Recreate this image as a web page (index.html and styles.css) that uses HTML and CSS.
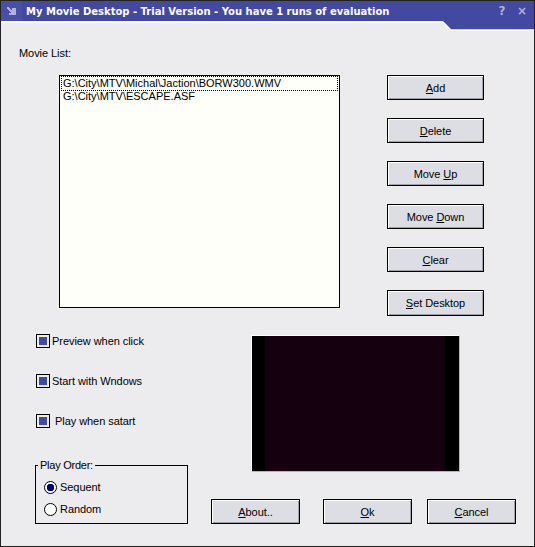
FILE: index.html
```html
<!DOCTYPE html>
<html lang="en">
<head>
<meta charset="utf-8">
<title>My Movie Desktop</title>
<link rel="stylesheet" href="styles.css">
</head>
<body>
<div class="window">
  <header class="titlebar">
    <span class="icon-slot"><svg class="app-icon" width="10" height="9" viewBox="0 0 10 9"><path d="M0 0h2v1h1v1h1v1h1V1h4v7H2V6h2V5H3V4H2V3H1V2H0z" fill="#b0b3d2"/></svg></span>
    <span class="title">My Movie Desktop - Trial Version - You have 1 runs of evaluation</span>
    <span class="caption-btn">?</span>
    <span class="caption-btn close">×</span>
  </header>
  <svg class="wedge" width="92" height="10" viewBox="0 0 92 10"><path d="M0 0h92v9H9z" fill="#4349a1"/><path d="M0 0l9 9h83" fill="none" stroke="#fff" stroke-width="1.4"/></svg>
  <main class="content">
    <div class="list-label">Movie List:</div>
    <section class="top-row">
      <div class="listbox">
        <div class="item selected">G:\City\MTV\Michal\Jaction\BORW300.WMV</div>
        <div class="item">G:\City\MTV\ESCAPE.ASF</div>
      </div>
      <div class="side-buttons">
        <button class="btn"><u>A</u>dd</button>
        <button class="btn"><u>D</u>elete</button>
        <button class="btn">Move <u>U</u>p</button>
        <button class="btn">Move <u>D</u>own</button>
        <button class="btn"><u>C</u>lear</button>
        <button class="btn tall"><u>S</u>et Desktop</button>
      </div>
    </section>
    <section class="bottom-row">
      <div class="options">
        <label class="check"><span class="box"></span><span>Preview when click</span></label>
        <label class="check"><span class="box"></span><span>Start with Wndows</span></label>
        <label class="check third"><span class="box"></span><span>Play when satart</span></label>
        <fieldset class="order">
          <legend>Play Order:</legend>
          <label class="radio"><span class="dot on"></span><span>Sequent</span></label>
          <label class="radio"><span class="dot"></span><span>Random</span></label>
        </fieldset>
      </div>
      <div class="right-side">
        <div class="preview"><div class="bar"></div><div class="movie"></div><div class="bar right"></div></div>
        <div class="bottom-buttons">
          <button class="btn wide"><u>A</u>bout..</button>
          <button class="btn wide ok"><u>O</u>k</button>
          <button class="btn wide"><u>C</u>ancel</button>
        </div>
      </div>
    </section>
  </main>
</div>
</body>
</html>
```
FILE: styles.css
```css
* { box-sizing: border-box; }
html, body { margin: 0; padding: 0; }
body { width: 535px; height: 547px; overflow: hidden; background: #ecebee; font-family: "Liberation Sans", Arial, sans-serif; font-size: 11px; letter-spacing: -0.06px; color: #000; }
.window { position: relative; width: 535px; height: 547px; background: #ecebee; border-left: 1px solid #222; border-right: 1px solid #222; border-bottom: 1px solid #222; display: flex; flex-direction: column; }
.titlebar { height: 23px; flex: none; background: #4349a1; border-top: 1px solid #222; border-bottom: 2px solid #fff; display: flex; align-items: center; color: #fff; }
.icon-slot { width: 21px; height: 20px; flex: none; background: #4a4fa6; display: flex; align-items: center; justify-content: center; }
.title { margin-left: 4px; font-family: "DejaVu Sans", sans-serif; font-weight: bold; font-size: 10px; letter-spacing: 0; flex: 1; white-space: nowrap; }
.caption-btn { color: #aeb1d6; font-family: "DejaVu Sans", sans-serif; font-weight: bold; font-size: 12px; width: 20px; text-align: center; }
.close { margin-right: 2px; }
.wedge { position: absolute; top: 21px; left: 441px; }
.content { flex: 1; display: flex; flex-direction: column; padding-top: 24px; }
.list-label { margin-left: 18px; height: 28px; line-height: 13px; }
.top-row { display: flex; margin-left: 58px; }
.listbox { width: 281px; height: 233px; background: #fdfff8; border: 1px solid #000; padding: 1px 2px; }
.item { height: 13px; line-height: 13px; padding-left: 1px; white-space: nowrap; letter-spacing: 0; }
.item.selected { outline: 1px dotted #000; outline-offset: 0; }
.side-buttons { margin-left: 47px; display: flex; flex-direction: column; gap: 18px; }
.btn { width: 97px; height: 25px; padding: 0; background: #dcdee3; border: 1px solid #000; box-shadow: inset 1px 1px 0 #fff, inset -1px -1px 0 #a0a0a8; font: inherit; letter-spacing: inherit; color: #000; }
.btn.tall { height: 26px; }
.btn.wide { width: 89px; }
.btn.ok { margin-left: 8px; }
.bottom-row { display: flex; margin-left: 34px; margin-top: 18px; }
.options { width: 216px; display: flex; flex-direction: column; }
.check { display: flex; align-items: center; gap: 2px; height: 14px; margin-bottom: 26px; }
.check.third { gap: 5px; margin-bottom: 0; }
.box { width: 14px; height: 14px; flex: none; margin-left: 1px; border: 1px solid #000; padding: 2px; background-clip: content-box; background-color: #4349a1; }
.order { width: 153px; height: 65px; margin: 31px 0 0 0; border: 1px solid #000; padding: 4px 0 0 8px; }
.order legend { padding: 0 2px; margin-left: -6px; line-height: 13px; letter-spacing: -0.25px; }
.radio { display: flex; align-items: center; gap: 3px; height: 22px; }
.dot { width: 13px; height: 13px; flex: none; border: 1px solid #000; border-radius: 50%; background: #fff; }
.dot.on { background: radial-gradient(circle, #00007c 0 3.5px, #fff 4px); }
.right-side { display: flex; flex-direction: column; }
.preview { margin-top: 1px; width: 209px; height: 137px; display: flex; background: #000; border-top: 1px solid #fff; border-left: 1px solid #fff; border-right: 1px solid #b5b5b8; border-bottom: 1px solid #b5b5b8; }
.bar { width: 13px; background: #000; flex: none; }
.bar.right { width: 14px; }
.movie { flex: 1; background: #14000f; }
.bottom-buttons { display: flex; margin-top: 27px; margin-left: -40px; gap: 15px; }
```
